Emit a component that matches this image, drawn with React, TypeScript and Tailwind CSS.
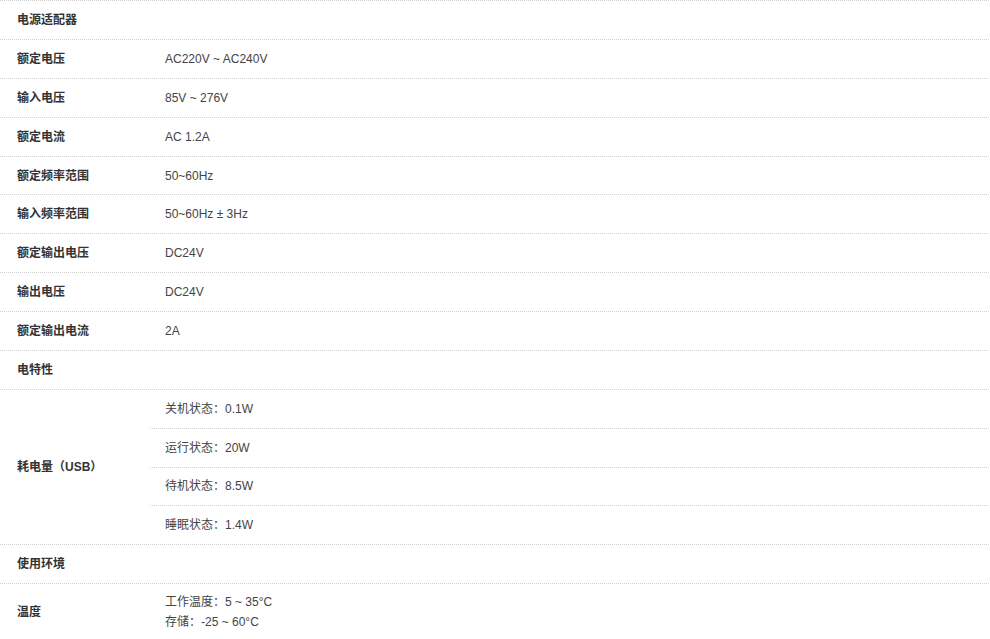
import React from "react";

const rows: { label: string; value?: string }[] = [
  { label: "电源适配器" },
  { label: "额定电压", value: "AC220V ~ AC240V" },
  { label: "输入电压", value: "85V ~ 276V" },
  { label: "额定电流", value: "AC 1.2A" },
  { label: "额定频率范围", value: "50~60Hz" },
  { label: "输入频率范围", value: "50~60Hz ± 3Hz" },
  { label: "额定输出电压", value: "DC24V" },
  { label: "输出电压", value: "DC24V" },
  { label: "额定输出电流", value: "2A" },
  { label: "电特性" },
];

const usb = ["关机状态：0.1W", "运行状态：20W", "待机状态：8.5W", "睡眠状态：1.4W"];

function Row({ label, value }: { label: string; value?: string }) {
  return (
    <div className="flex h-[38.9px] border-b border-dotted border-[#cfcfcf]">
      <div className="w-[150px] shrink-0 pl-[17px] flex items-center font-bold text-[#333]">{label}</div>
      <div className="pl-[15px] flex items-center text-[#444]">{value}</div>
    </div>
  );
}

export default function App() {
  return (
    <div
      className="w-[989px] bg-white text-[12px] leading-[20px]"
      style={{ fontFamily: '"Liberation Sans", Arial, "Noto Sans CJK SC", sans-serif' }}
    >
      <div className="border-t border-dotted border-[#cfcfcf]">
        {rows.map((r) => (
          <Row key={r.label} label={r.label} value={r.value} />
        ))}
        <div className="flex border-b border-dotted border-[#cfcfcf]">
          <div className="w-[150px] shrink-0 pl-[17px] flex items-center font-bold text-[#333]">耗电量（USB）</div>
          <div className="flex-1 flex flex-col">
            {usb.map((u, i) => (
              <div
                key={u}
                className={
                  i < usb.length - 1
                    ? "h-[38.8px] pl-[15px] flex items-center text-[#444] border-b border-dotted border-[#cfcfcf]"
                    : "h-[37.8px] pl-[15px] flex items-center text-[#444]"
                }
              >
                {u}
              </div>
            ))}
          </div>
        </div>
        <Row label="使用环境" />
        <div className="flex py-[8px] border-b border-dotted border-[#cfcfcf]">
          <div className="w-[150px] shrink-0 pl-[17px] flex items-center font-bold text-[#333]">温度</div>
          <div className="pl-[15px] flex flex-col text-[#444]">
            <div>工作温度：5 ~ 35°C</div>
            <div>存储：-25 ~ 60°C</div>
          </div>
        </div>
      </div>
    </div>
  );
}
